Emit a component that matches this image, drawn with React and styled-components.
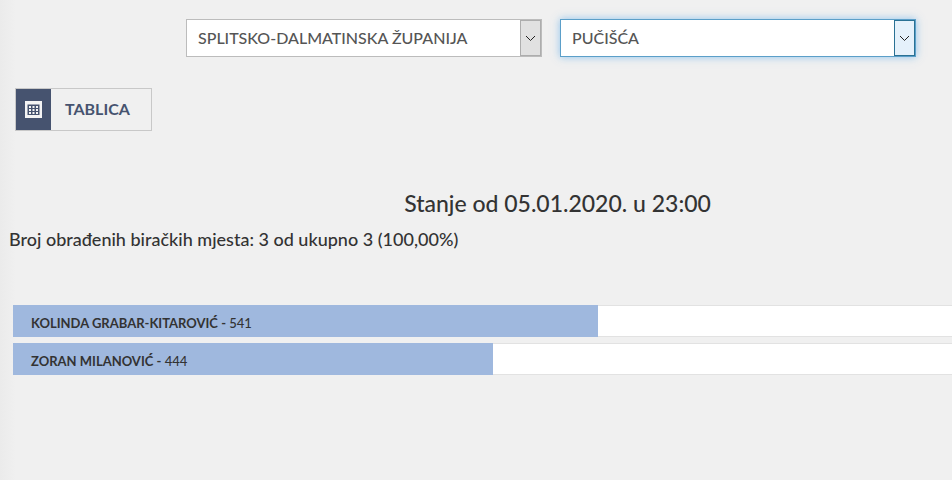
import React, { useState } from 'react'
import styled, { createGlobalStyle } from 'styled-components'

const GlobalStyle = createGlobalStyle`
  * {
    box-sizing: border-box;
  }
  html {
    background: #f0f0f0;
  }
  body {
    margin: 0;
    color: #333;
    font-family: 'Trebuchet MS', Lato, 'Open Sans', sans-serif;
    font-weight: 500;
  }
`

const candidates = [
  { name: 'KOLINDA GRABAR-KITAROVIĆ', votes: 541 },
  { name: 'ZORAN MILANOVIĆ', votes: 444 },
]
const total = candidates.reduce((sum, { votes }) => sum + votes, 0)

const SelectBox = ({ label, options, active }) => {
  const [value, setValue] = useState(options[0])
  return (
    <SelectShell $active={active}>
      <select
        aria-label={label}
        value={value}
        onChange={(e) => setValue(e.target.value)}
      >
        {options.map((option) => (
          <option key={option}>{option}</option>
        ))}
      </select>
      <Arrow $active={active}>
        <svg width="11" height="7" viewBox="0 0 11 7" aria-hidden="true">
          <path d="M1 1l4.5 4.5L10 1" fill="none" stroke="currentColor" />
        </svg>
      </Arrow>
    </SelectShell>
  )
}

const App = () => {
  return (
    <Viewport>
      <GlobalStyle />
      <Page>
        <Filters>
          <SelectBox label="Županija" options={['SPLITSKO-DALMATINSKA ŽUPANIJA']} />
          <SelectBox label="Grad / općina" options={['PUČIŠĆA']} active />
        </Filters>
        <TableButton type="button">
          <span className="icon">
            <svg width="17" height="17" viewBox="0 0 17 17" aria-hidden="true">
              <path fill="#f4f4f4" d="M0 0h17v17H0z" />
              <path fill="#46536f" d="M2.5 3.5h12v10.5h-12z" />
              <path
                fill="#f4f4f4"
                d="M4 5h2v2H4zM7.5 5h2v2h-2zM11 5h2v2h-2zM4 8h2v2H4zM7.5 8h2v2h-2zM11 8h2v2h-2zM4 11h2v2H4zM7.5 11h2v2h-2zM11 11h2v2h-2z"
              />
            </svg>
          </span>
          <span className="text">TABLICA</span>
        </TableButton>
        <Heading>Stanje od 05.01.2020. u 23:00</Heading>
        <Summary>Broj obrađenih biračkih mjesta: 3 od ukupno 3 (100,00%)</Summary>
        <Results>
          {candidates.map(({ name, votes }) => (
            <Track key={name}>
              <Bar style={{ width: `${(votes / total) * 100}%` }}>
                <strong>{name} -</strong> {votes}
              </Bar>
            </Track>
          ))}
        </Results>
      </Page>
    </Viewport>
  )
}

const Viewport = styled.div`
  min-height: 100vh;
  overflow: hidden;
  background: linear-gradient(to right, #ebebeb, #f0f0f0 16px);
`
const Page = styled.main`
  min-width: 1102px;
  padding-top: 19px;
`
const Filters = styled.div`
  display: flex;
  justify-content: center;
  gap: 18px;
`
const SelectShell = styled.div`
  display: flex;
  width: 356px;
  height: 38px;
  background: #fff;
  border: 1px solid ${({ $active }) => ($active ? '#5b9fc9' : '#bcbcbc')};
  box-shadow: ${({ $active }) =>
    $active ? '0 0 8px rgba(102, 175, 233, 0.7)' : 'none'};
  position: relative;

  select {
    flex: 1;
    appearance: none;
    border: 0;
    outline: 0;
    padding: 0 32px 2px 11px;
    background: transparent;
    color: #555;
    font-family: inherit;
    font-size: 16px;
    font-weight: inherit;
  }
`
const Arrow = styled.span`
  position: absolute;
  top: 0;
  right: 0;
  bottom: 0;
  width: 21px;
  display: flex;
  align-items: center;
  justify-content: center;
  pointer-events: none;
  color: #222;
  background: ${({ $active }) => ($active ? '#e5f1fb' : '#e1e1e1')};
  border: 1px solid ${({ $active }) => ($active ? '#2a7194' : '#adadad')};
`
const TableButton = styled.button`
  display: flex;
  height: 43px;
  margin: 31px 0 0 15px;
  padding: 0;
  background: #f0f0f0;
  border: 1px solid #c8c8c8;
  color: #46536f;
  font-family: inherit;
  font-size: 16px;
  font-weight: bold;
  cursor: pointer;

  .icon,
  .text {
    display: flex;
    align-items: center;
    height: 100%;
  }
  .icon {
    width: 35px;
    justify-content: center;
    background: #46536f;
  }
  .text {
    padding: 0 21px 2px 14px;
  }
`
const Heading = styled.h1`
  margin: 56px 0 0 13px;
  font-size: 23px;
  font-weight: inherit;
  line-height: 32px;
  text-align: center;
`
const Summary = styled.p`
  margin: 8px 0 0 9px;
  font-size: 18px;
  line-height: 24px;
`
const Results = styled.section`
  display: flex;
  flex-direction: column;
  gap: 6px;
  margin: 54px 24px 0 13px;
`
const Track = styled.div`
  background: #fff;
  box-shadow: inset 0 1px 0 #e2e2e2, inset 0 -1px 0 #e2e2e2;
`
const Bar = styled.div`
  padding: 4px 18px 0;
  background: #9fb8de;
  font-size: 13px;
  line-height: 28px;
  white-space: nowrap;
`

export default App
